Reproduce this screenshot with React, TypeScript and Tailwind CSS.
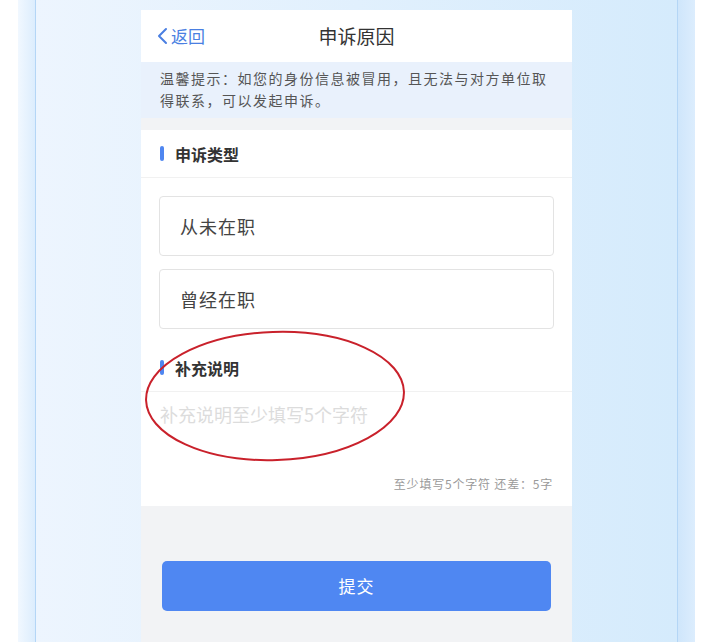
import React from 'react';

const font = { fontFamily: '"Noto Sans CJK SC", "Noto Sans", sans-serif' };

function SectionTitle({ title }: { title: string }) {
  return (
    <div className="flex h-[48px] items-center border-b border-[#f1f1f1] px-[19px]">
      <span className="h-[15px] w-[4px] rounded-full bg-[#4f86f0]" />
      <span className="ml-[11px] text-[16px] font-semibold text-[#333]">{title}</span>
    </div>
  );
}

function Option({ label }: { label: string }) {
  return (
    <div className="flex h-[60px] items-center rounded-[4px] border border-[#e3e3e3] px-[20px] text-[18px] tracking-[1px] text-[#444]">
      {label}
    </div>
  );
}

export default function App() {
  return (
    <div className="flex h-[642px] w-full overflow-hidden bg-white" style={font}>
      <div className="w-[18px] bg-white" />
      <div className="w-[18px] border-r border-[#b4d6f6] bg-gradient-to-r from-[#f1f8ff] to-[#dcedfd]" />
      <div className="relative flex flex-1 justify-center bg-gradient-to-r from-[#edf5fe] to-[#d5ebfc] pt-[10px]">
        <div className="flex w-[431px] flex-col bg-[#f2f3f5]">
          {/* header */}
          <div className="relative flex h-[52px] items-center justify-center bg-white">
            <div className="absolute left-[15px] flex items-center text-[17px] text-[#4a7fe2]">
              <svg width="14" height="18" viewBox="0 0 14 18" fill="none">
                <path d="M10 2 L3 9 L10 16" stroke="#4a7fe2" strokeWidth="2" strokeLinecap="round" strokeLinejoin="round" />
              </svg>
              <span className="ml-[1px]">返回</span>
            </div>
            <span className="text-[19px] text-[#333]">申诉原因</span>
          </div>

          {/* tip */}
          <div className="bg-[#e9f1fc] px-[19px] pt-[5px] pb-[7px] text-[14px] leading-[22px] tracking-[1.5px] text-[#555]">
            温馨提示：如您的身份信息被冒用，且无法与对方单位取得联系，可以发起申诉。
          </div>

          <div className="mt-[12px] bg-white">
            <SectionTitle title="申诉类型" />
            <div className="flex flex-col gap-[13px] px-[18px] pt-[18px] pb-[15px]">
              <Option label="从未在职" />
              <Option label="曾经在职" />
            </div>
            <SectionTitle title="补充说明" />
            <div className="px-[19px] pt-[10px] pb-[14px]">
              <div className="h-[74px] text-[18px] leading-[24px] text-[#dcdcdc]">补充说明至少填写5个字符</div>
              <div className="text-right text-[12px] leading-[16px] tracking-[0.8px] text-[#9a9a9a]">
                至少填写5个字符 还差：5字
              </div>
            </div>
          </div>

          <div className="px-[21px] pt-[55px]">
            <button className="h-[50px] w-full rounded-[5px] bg-[#4f87f2] text-[17px] tracking-[1px] text-white">
              提交
            </button>
          </div>
        </div>

        {/* red annotation ellipse */}
        <svg className="pointer-events-none absolute left-[107px] top-[329px]" width="264" height="136" viewBox="0 0 264 136">
          <ellipse cx="132" cy="67" rx="129" ry="64" fill="none" stroke="#c9212b" strokeWidth="2" transform="rotate(-2 132 67)" />
        </svg>
      </div>
      <div className="w-[18px] border-l border-[#b4d6f6] bg-gradient-to-r from-[#cfe6fb] to-[#dcedfd]" />
      <div className="w-[29px] bg-white" />
    </div>
  );
}
